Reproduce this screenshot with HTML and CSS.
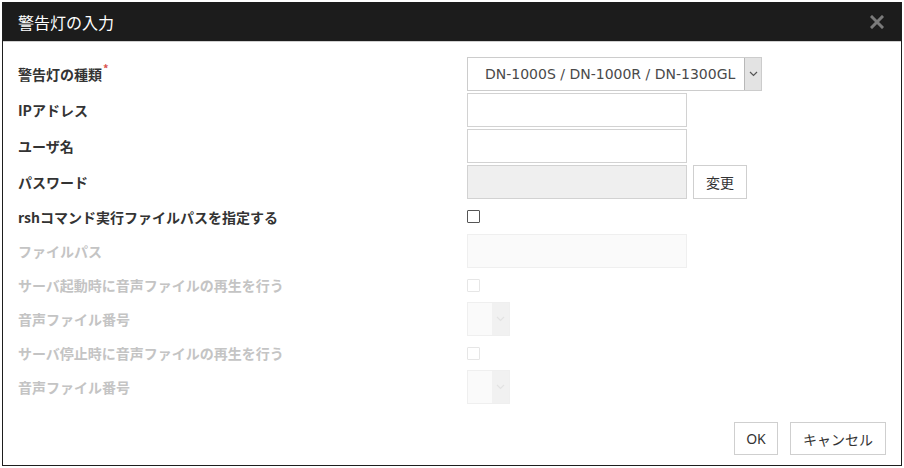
FILE: index.html
```html
<!DOCTYPE html>
<html lang="ja">
<head>
<meta charset="utf-8">
<link rel="stylesheet" href="styles.css">
</head>
<body>
<div class="dialog">
  <div class="titlebar">
    <span class="title">警告灯の入力</span>
    <svg class="close" width="14" height="14" viewBox="0 0 14 14"><path d="M2 2 L12 12 M12 2 L2 12" stroke="#7a7a7a" stroke-width="3" stroke-linecap="square"/></svg>
  </div>
  <div class="body">
    <div class="form">
      <div class="label">警告灯の種類<sup class="req">*</sup></div>
      <div class="ctrl">
        <div class="select">
          <span class="select-text">DN-1000S / DN-1000R / DN-1300GL</span>
          <span class="select-arrow"><svg width="9" height="6" viewBox="0 0 9 6"><path d="M1 1 L4.5 4.5 L8 1" fill="none" stroke="#555" stroke-width="1.2"/></svg></span>
        </div>
      </div>

      <div class="label">IPアドレス</div>
      <div class="ctrl"><div class="input"></div></div>

      <div class="label">ユーザ名</div>
      <div class="ctrl"><div class="input"></div></div>

      <div class="label">パスワード</div>
      <div class="ctrl"><div class="input readonly"></div><div class="btn btn-change">変更</div></div>

      <div class="label">rshコマンド実行ファイルパスを指定する</div>
      <div class="ctrl"><span class="checkbox"></span></div>

      <div class="label disabled">ファイルパス</div>
      <div class="ctrl"><div class="input disabled-input"></div></div>

      <div class="label disabled">サーバ起動時に音声ファイルの再生を行う</div>
      <div class="ctrl"><span class="checkbox disabled-cb"></span></div>

      <div class="label disabled">音声ファイル番号</div>
      <div class="ctrl">
        <div class="mini-select"><span class="mini-left"></span><span class="mini-arrow"><svg width="9" height="6" viewBox="0 0 9 6"><path d="M1 1 L4.5 4.5 L8 1" fill="none" stroke="#e2e2e2" stroke-width="1.2"/></svg></span></div>
      </div>

      <div class="label disabled">サーバ停止時に音声ファイルの再生を行う</div>
      <div class="ctrl"><span class="checkbox disabled-cb"></span></div>

      <div class="label disabled">音声ファイル番号</div>
      <div class="ctrl">
        <div class="mini-select"><span class="mini-left"></span><span class="mini-arrow"><svg width="9" height="6" viewBox="0 0 9 6"><path d="M1 1 L4.5 4.5 L8 1" fill="none" stroke="#e2e2e2" stroke-width="1.2"/></svg></span></div>
      </div>
    </div>
    <div class="footer">
      <div class="btn btn-ok">OK</div>
      <div class="btn btn-cancel">キャンセル</div>
    </div>
  </div>
</div>
</body>
</html>
```

FILE: styles.css
```css
* { box-sizing: border-box; }
html, body { margin: 0; padding: 0; background: #fff; }
body {
  padding: 2px;
  font-family: "Noto Sans", "Noto Sans CJK JP", sans-serif;
  color: #333;
}
.dialog {
  width: 900px;
  height: 464px;
  border: 1px solid #1e1e1e;
  border-top: none;
  display: flex;
  flex-direction: column;
  background: #fff;
}
.titlebar {
  height: 40px;
  background: #1c1c1c;
  border-bottom: 1px solid #d0d0d0;
  display: flex;
  align-items: center;
  justify-content: space-between;
  padding: 0 17px 0 15px;
  flex: none;
}
.title {
  color: #fff;
  font-size: 16px;
  font-family: "Noto Sans CJK JP", sans-serif;
}
.close { display: block; }
.body {
  flex: 1;
  display: flex;
  flex-direction: column;
  justify-content: space-between;
  padding: 15px 15px 10px 15px;
}
.form {
  display: grid;
  grid-template-columns: 449px 1fr;
  grid-template-rows: 34px 34px 34px 34px 31px 34px 30px 34px 30px 34px;
  row-gap: 2px;
}
.label {
  font-size: 14px;
  font-weight: bold;
  font-family: "Noto Sans CJK JP", sans-serif;
  color: #333;
  display: flex;
  align-items: center;
  white-space: nowrap;
}
.label.disabled { color: #c4c4c4; }
.req {
  color: #d9534f;
  font-size: 11px;
  align-self: flex-start;
  margin-top: 6px;
  margin-left: 1px;
  line-height: 1;
}
.ctrl { display: flex; align-items: center; gap: 6px; }
.select {
  width: 295px;
  height: 34px;
  border: 1px solid #ccc;
  display: flex;
  align-items: stretch;
}
.select-text {
  flex: 1;
  padding-left: 17px;
  font-size: 14px;
  font-family: "DejaVu Sans", sans-serif;
  color: #4a4a4a;
  display: flex;
  align-items: center;
}
.select-arrow {
  width: 17px;
  background: #e3e3e3;
  border-left: 1px solid #b8b8b8;
  display: flex;
  align-items: center;
  justify-content: center;
}
.input {
  width: 220px;
  height: 34px;
  border: 1px solid #d2d2d2;
  background: #fff;
}
.input.readonly { background: #efefef; }
.input.disabled-input { background: #fafafa; border-color: #efefef; }
.btn {
  height: 34px;
  border: 1px solid #cfcfcf;
  background: #fff;
  display: flex;
  align-items: center;
  justify-content: center;
  font-size: 14px;
  color: #333;
  font-family: "Noto Sans", "Noto Sans CJK JP", sans-serif;
}
.btn-change { width: 54px; }
.checkbox {
  width: 13px;
  height: 13px;
  border: 1.5px solid #555;
  border-radius: 1px;
  background: #fff;
  display: block;
}
.checkbox.disabled-cb { border: 1px solid #e6e6e6; }
.mini-select {
  width: 43px;
  height: 34px;
  border: 1px solid #efefef;
  display: flex;
}
.mini-left { flex: 1; background: #fafafa; }
.mini-arrow {
  width: 17px;
  background: #f1f1f1;
  display: flex;
  align-items: center;
  justify-content: center;
}
.footer {
  display: flex;
  justify-content: flex-end;
  gap: 12px;
}
.btn-ok { width: 44px; height: 33px; }
.btn-cancel { width: 96px; height: 33px; }
```
